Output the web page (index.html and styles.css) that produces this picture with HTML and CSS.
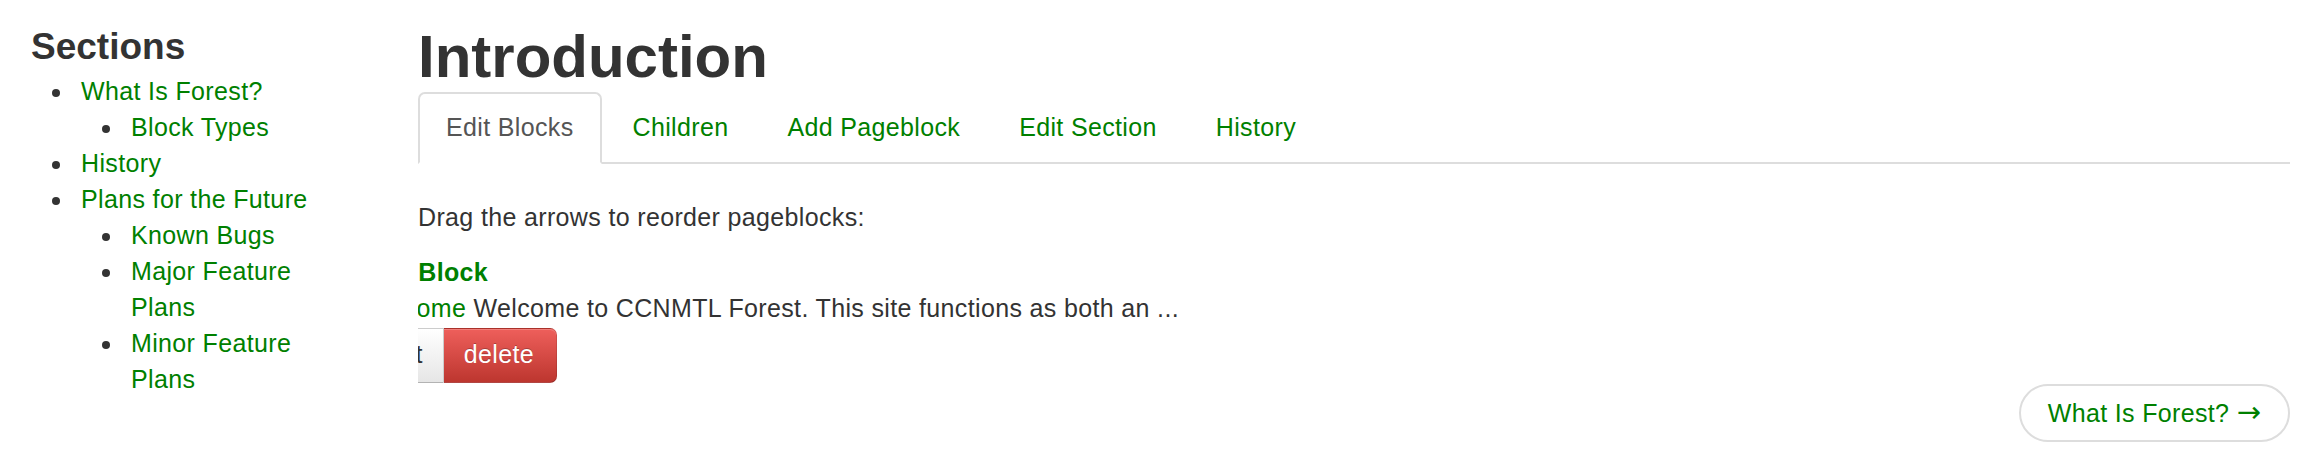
FILE: index.html
```html
<!DOCTYPE html>
<html lang="en">
<head>
<meta charset="utf-8">
<title>Introduction</title>
<link rel="stylesheet" href="styles.css">
</head>
<body>
<div class="page">
  <aside class="sidebar">
    <h3 class="sidebar-title">Sections</h3>
    <ul class="toc">
      <li><a href="#">What Is Forest?</a>
        <ul class="toc">
          <li><a href="#">Block Types</a></li>
        </ul>
      </li>
      <li><a href="#">History</a></li>
      <li><a href="#">Plans for the Future</a>
        <ul class="toc">
          <li><a href="#">Known Bugs</a></li>
          <li><a href="#">Major Feature Plans</a></li>
          <li><a href="#">Minor Feature Plans</a></li>
        </ul>
      </li>
    </ul>
  </aside>
  <main class="main">
    <h1 class="page-title">Introduction</h1>
    <ul class="tabs">
      <li class="tab active"><a href="#">Edit Blocks</a></li>
      <li class="tab"><a href="#">Children</a></li>
      <li class="tab"><a href="#">Add Pageblock</a></li>
      <li class="tab"><a href="#">Edit Section</a></li>
      <li class="tab"><a href="#">History</a></li>
    </ul>
    <div class="tab-pane">
      <p class="hint">Drag the arrows to reorder pageblocks:</p>
      <div class="pageblock">
        <div class="pageblock-inner">
          <h4 class="block-type">Text Block</h4>
          <div class="block-line"><a href="#">Welcome</a> Welcome to CCNMTL Forest. This site functions as both an ...</div>
          <div class="btn-group">
            <a href="#" class="btn">edit</a>
            <a href="#" class="btn btn-danger">delete</a>
          </div>
        </div>
      </div>
    </div>
    <div class="pager">
      <a href="#" class="pager-next">What Is Forest? <span class="arrow">&rarr;</span></a>
    </div>
  </main>
</div>
</body>
</html>
```
FILE: styles.css
```css
html, body {
  margin: 0;
  padding: 0;
  background: #fff;
}

body {
  font-family: "Liberation Sans", Arial, Helvetica, sans-serif;
  font-size: 25px;
  line-height: 36px;
  letter-spacing: 0.35px;
  color: #333;
}

a {
  color: #008000;
  text-decoration: none;
}

.page {
  display: flex;
  padding: 0 20px 0 31px;
}

/* Sidebar */
.sidebar {
  flex: none;
  width: 314px;
}

.sidebar-title {
  margin: 25px 0 4px;
  font-size: 37px;
  line-height: 44px;
  font-weight: bold;
  letter-spacing: 0;
  color: #333;
}

.toc {
  list-style: none;
  margin: 0;
  padding: 0 0 0 50px;
}

.toc li::before {
  content: "";
  display: inline-block;
  width: 8px;
  height: 8px;
  border-radius: 50%;
  background: #333;
  vertical-align: middle;
  margin-left: -29px;
  margin-right: 21px;
}

/* Main column */
.main {
  flex: 1;
  min-width: 0;
  margin-left: 73px;
}

.page-title {
  margin: 24px 0 2px;
  font-size: 60px;
  line-height: 66px;
  font-weight: bold;
  letter-spacing: 0;
  color: #333;
}

.tabs {
  display: flex;
  list-style: none;
  margin: 0;
  padding: 0;
  border-bottom: 2px solid #ddd;
}

.tab {
  margin-right: 3px;
  margin-bottom: -2px;
}

.tab a {
  display: block;
  padding: 15px 26px 17px;
  border: 2px solid transparent;
  border-radius: 7px 7px 0 0;
}

.tab.active a {
  color: #555;
  background: #fff;
  border-color: #ddd;
  border-bottom-color: transparent;
}

.hint {
  margin: 35px 0 0;
}

.pageblock {
  margin-top: 19px;
  overflow: hidden;
}

.pageblock-inner {
  margin-left: -58px;
}

.block-type {
  margin: 0;
  font-size: 25px;
  line-height: 36px;
  font-weight: bold;
  color: #008000;
}

.block-line {
  white-space: nowrap;
}

.btn-group {
  display: flex;
  margin-top: 2px;
}

.btn {
  display: block;
  padding: 7px 20px 10px;
  line-height: 36px;
  color: #333;
  border: 1px solid #ccc;
  border-bottom-color: #b3b3b3;
  background: linear-gradient(#ffffff, #e6e6e6);
  border-radius: 7px 0 0 7px;
}

.btn-danger {
  padding: 7px 22px 10px 20px;
  color: #fff;
  border-color: rgba(0, 0, 0, 0.1) rgba(0, 0, 0, 0.1) rgba(0, 0, 0, 0.25);
  border-left: 0;
  background: linear-gradient(#ee5f5b, #bd362f);
  border-radius: 0 7px 7px 0;
  text-shadow: 0 -1px 0 rgba(0, 0, 0, 0.25);
  box-shadow: inset 0 1px 0 rgba(255, 255, 255, 0.2);
}

.pager {
  display: flex;
  justify-content: flex-end;
  margin-top: 1px;
}

.pager-next {
  display: block;
  padding: 9px 27px;
  line-height: 36px;
  border: 2px solid #ddd;
  border-radius: 32px;
  background: #fff;
}

.arrow {
  font-family: "DejaVu Sans", sans-serif;
  font-size: 29px;
  line-height: 1;
  letter-spacing: 0;
}
```
